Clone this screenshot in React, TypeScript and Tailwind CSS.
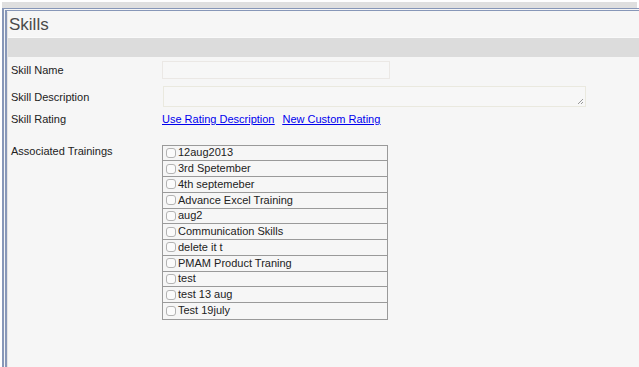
const trainings = [
  "12aug2013",
  "3rd Spetember",
  "4th septemeber",
  "Advance Excel Training",
  "aug2",
  "Communication Skills",
  "delete it t",
  "PMAM Product Traning",
  "test",
  "test 13 aug",
  "Test 19july",
];

const TrainingRow = ({ name }: { name: string }) => {
  return (
    <div className="flex h-[15.75px] items-center gap-[2px] border-b border-[#9a9a9a] pl-[3px] last:border-b-0">
      <span className="h-[10px] w-[10px] rounded-[3px] border border-[#b3b3b3] bg-[#fbfbfb]" />
      <span className="text-[11px] leading-none text-[#222]">{name}</span>
    </div>
  );
};

export default function App() {
  return (
    <div
      className="flex h-[367px] w-[639px] flex-col bg-white pl-[2px] pt-[2px]"
      style={{ fontFamily: '"Liberation Sans", Arial, sans-serif' }}
    >
      <div className="mr-[2px] h-[6px] bg-[#dfdfdf]" />
      <div className="flex flex-1 flex-col border-l-[5px] border-t-[3px] border-double border-[#8797b8] bg-[#f6f6f6] pt-[1px]">
        <div className="flex flex-1 flex-col border-l border-[#e4e4e4]">
          <div className="h-[24px] pl-[1px] text-[17px] leading-[25px] text-[#4a4a4a]">
            Skills
          </div>
          <div className="mt-[1px] h-[20px] border-t border-[#fafafa] bg-[#dcdcdc]" />

          <div className="flex flex-col pl-[3px] text-[11px] text-[#222]">
            <div className="mt-[4px] flex items-center">
              <div className="w-[151px]">Skill Name</div>
              <div className="h-[18px] w-[228px] border border-[#ebe8e5] bg-[#f7f7f7]" />
            </div>

            <div className="mt-[7px] flex items-center">
              <div className="w-[152px] pt-[1px]">Skill Description</div>
              <div className="relative h-[21px] w-[423px] border border-[#eae9df] bg-[#f7f7f7]">
                <svg
                  className="absolute bottom-[1px] right-[1px]"
                  width="7"
                  height="7"
                  viewBox="0 0 7 7"
                >
                  <path d="M6 1 L1 6 M6 4 L4 6" stroke="#999" strokeWidth="1" />
                </svg>
              </div>
            </div>

            <div className="mt-[4px] flex items-center">
              <div className="w-[151px]">Skill Rating</div>
              <div className="flex gap-[8px] text-[#0000ee] underline">
                <a href="#">Use Rating Description</a>
                <a href="#">New Custom Rating</a>
              </div>
            </div>

            <div className="mt-[17px] flex items-start">
              <div className="w-[151px] leading-[13px]">Associated Trainings</div>
              <div className="w-[226px] border border-[#9a9a9a] bg-[#f6f6f6]">
                {trainings.map((t) => (
                  <TrainingRow key={t} name={t} />
                ))}
              </div>
            </div>
          </div>
        </div>
      </div>
    </div>
  );
}
